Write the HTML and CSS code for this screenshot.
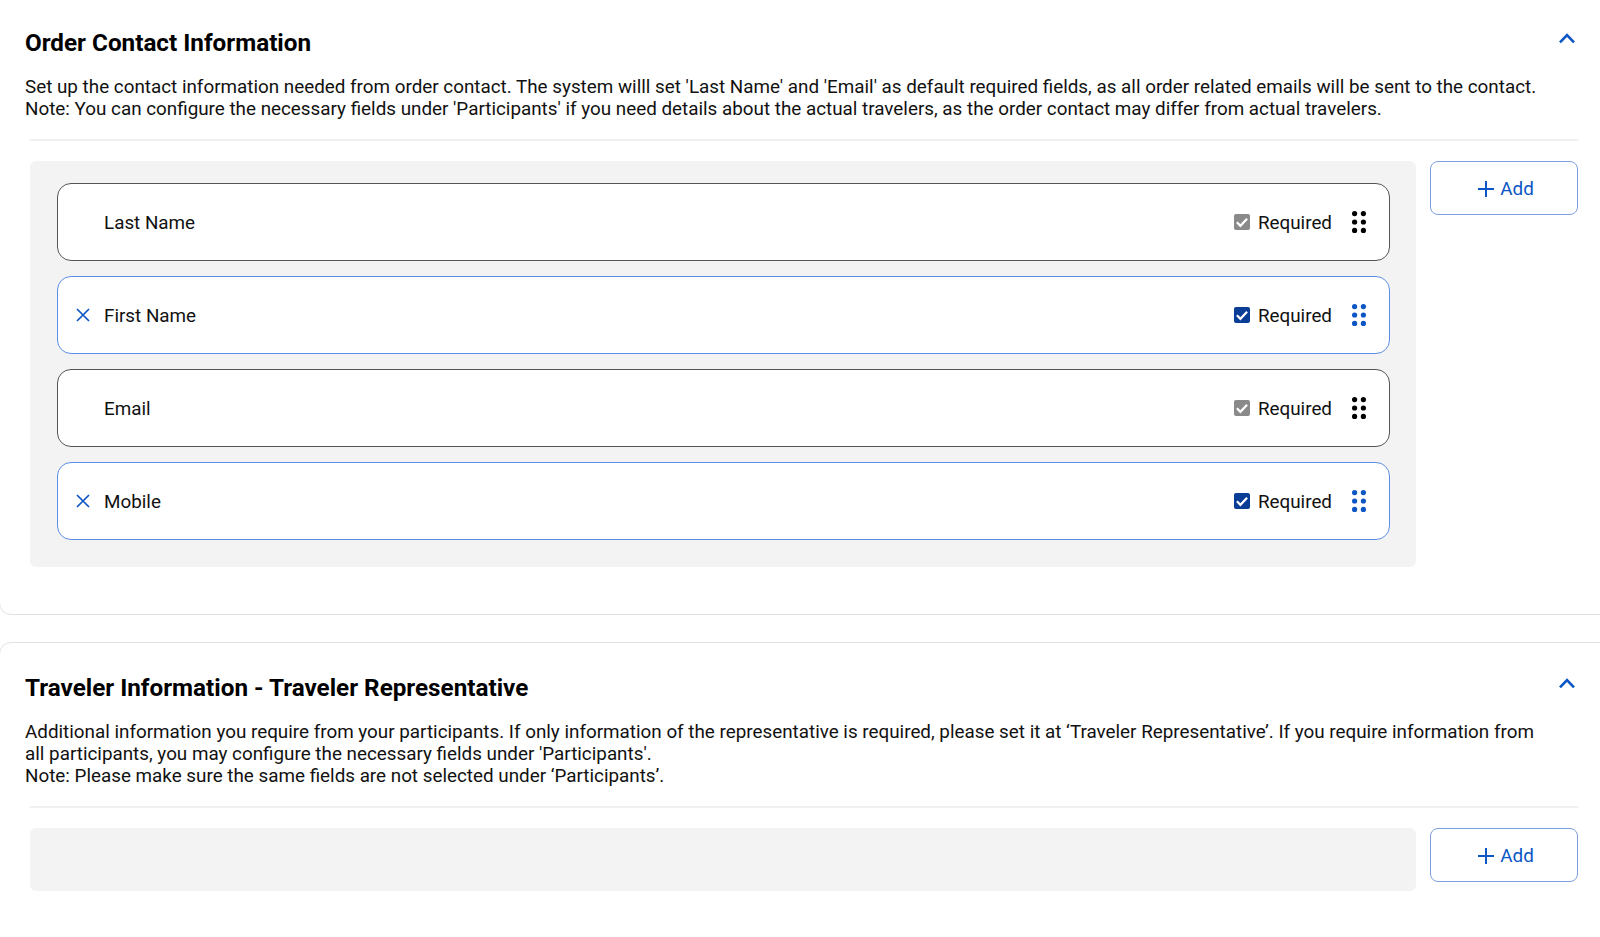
FILE: index.html
```html
<!DOCTYPE html>
<html lang="en">
<head>
<meta charset="utf-8">
<title>Order settings</title>
<link rel="stylesheet" href="styles.css">
</head>
<body>
<svg class="sprites" width="0" height="0" aria-hidden="true">
  <symbol id="chev" viewBox="0 0 16 11"><path d="M1 9.4 8 2.2l7 7.2" fill="none" stroke="currentColor" stroke-width="2.6"/></symbol>
  <symbol id="plus" viewBox="0 0 16 16"><path d="M8 0v16M0 8h16" fill="none" stroke="currentColor" stroke-width="2"/></symbol>
  <symbol id="x" viewBox="0 0 14 14"><path d="M1 1l12 12M13 1 1 13" fill="none" stroke="currentColor" stroke-width="1.7"/></symbol>
  <symbol id="check" viewBox="0 0 16 16"><rect width="16" height="16" rx="2" fill="currentColor"/><path d="M2.9 8.2 6.4 11.8 13.1 4.7" fill="none" stroke="#fff" stroke-width="2.2"/></symbol>
  <symbol id="dots" viewBox="0 0 14 22"><g fill="currentColor"><circle cx="2.6" cy="2.6" r="2.6"/><circle cx="11.4" cy="2.6" r="2.6"/><circle cx="2.6" cy="11" r="2.6"/><circle cx="11.4" cy="11" r="2.6"/><circle cx="2.6" cy="19.4" r="2.6"/><circle cx="11.4" cy="19.4" r="2.6"/></g></symbol>
</svg>
<main class="page">
  <section class="card card-first">
    <header class="card-head">
      <h2 class="title">Order Contact Information</h2>
      <svg class="chev"><use href="#chev"/></svg>
    </header>
    <p class="desc">Set up the contact information needed from order contact. The system willl set 'Last Name' and 'Email' as default required fields, as all order related emails will be sent to the contact.<br>Note: You can configure the necessary fields under 'Participants' if you need details about the actual travelers, as the order contact may differ from actual travelers.</p>
    <hr class="rule">
    <div class="editor">
      <div class="well">
        <div class="row">
          <span class="row-x"></span>
          <span class="row-name">Last Name</span>
          <svg class="box box-off"><use href="#check"/></svg>
          <span class="req">Required</span>
          <svg class="dots"><use href="#dots"/></svg>
        </div>
        <div class="row row-edit">
          <svg class="row-x"><use href="#x"/></svg>
          <span class="row-name">First Name</span>
          <svg class="box"><use href="#check"/></svg>
          <span class="req">Required</span>
          <svg class="dots"><use href="#dots"/></svg>
        </div>
        <div class="row">
          <span class="row-x"></span>
          <span class="row-name">Email</span>
          <svg class="box box-off"><use href="#check"/></svg>
          <span class="req">Required</span>
          <svg class="dots"><use href="#dots"/></svg>
        </div>
        <div class="row row-edit">
          <svg class="row-x"><use href="#x"/></svg>
          <span class="row-name">Mobile</span>
          <svg class="box"><use href="#check"/></svg>
          <span class="req">Required</span>
          <svg class="dots"><use href="#dots"/></svg>
        </div>
      </div>
      <button class="add" type="button"><svg class="plus"><use href="#plus"/></svg>Add</button>
    </div>
  </section>
  <section class="card card-second">
    <header class="card-head">
      <h2 class="title">Traveler Information - Traveler Representative</h2>
      <svg class="chev"><use href="#chev"/></svg>
    </header>
    <p class="desc">Additional information you require from your participants. If only information of the representative is required, please set it at ‘Traveler Representative’. If you require information from<br>all participants, you may configure the necessary fields under 'Participants'.<br>Note: Please make sure the same fields are not selected under ‘Participants’.</p>
    <hr class="rule">
    <div class="editor">
      <div class="well well-empty"></div>
      <button class="add" type="button"><svg class="plus"><use href="#plus"/></svg>Add</button>
    </div>
  </section>
</main>
</body>
</html>
```
FILE: styles.css
```css
* { box-sizing: border-box; }
html, body { margin: 0; height: 937px; overflow: hidden; background: #fff; }
body { font-family: Roboto, "Liberation Sans", sans-serif; color: #111; }
.sprites { position: absolute; }
.page { display: flex; flex-direction: column; gap: 27px; margin: -20px -20px 0 -1px; }
.card { background: #fff; border: 1px solid #e2e2e2; border-radius: 12px; padding: 0 41px 0 25px; }
.card-first { height: 635px; padding-top: 48px; }
.card-second { height: 320px; padding-top: 31px; }
.card-head { display: flex; justify-content: space-between; align-items: flex-start; height: 30px; }
.title { margin: 0; font-size: 24.25px; line-height: 29px; font-weight: 700; color: #000; }
.chev { width: 16px; height: 11px; margin: 4px 3px 0 0; color: #0b55c4; }
.desc { margin: 17px 0 0; font-size: 18.84px; line-height: 22px; color: #111; }
.rule { margin: 19px 0 0 5px; border: 0; height: 2px; background: #f0f0f0; }
.editor { display: flex; align-items: flex-start; gap: 14px; margin: 20px 0 0 5px; }
.well { flex: 1; display: flex; flex-direction: column; gap: 15px; background: #f3f3f3; border-radius: 6px; padding: 22px 26px 27px 27px; }
.well-empty { height: 63px; }
.row { display: flex; align-items: center; height: 78px; background: #fff; border: 1px solid #555; border-radius: 14px; padding: 0 23px 0 18px; font-size: 18.84px; }
.row-edit { border-color: #5b8fe6; }
.row-x { width: 14px; height: 14px; margin-right: 14px; color: #0b55c4; flex: none; }
.row-name { flex: 1; padding-top: 1px; }
.box { width: 16px; height: 16px; margin-right: 8px; color: #0a3d96; }
.box-off { color: #8a8a8a; }
.req { margin-right: 20px; padding-top: 1px; }
.dots { width: 14px; height: 22px; color: #000; }
.row-edit .dots { color: #0b55c4; }
.add { width: 148px; height: 54px; display: flex; align-items: center; justify-content: center; gap: 6px; background: #fff; border: 1px solid #7d9fe0; border-radius: 8px; font: 400 18.84px Roboto, sans-serif; color: #0b55c4; padding: 2px 0 0 4px; }
.plus { width: 16px; height: 16px; }
```
